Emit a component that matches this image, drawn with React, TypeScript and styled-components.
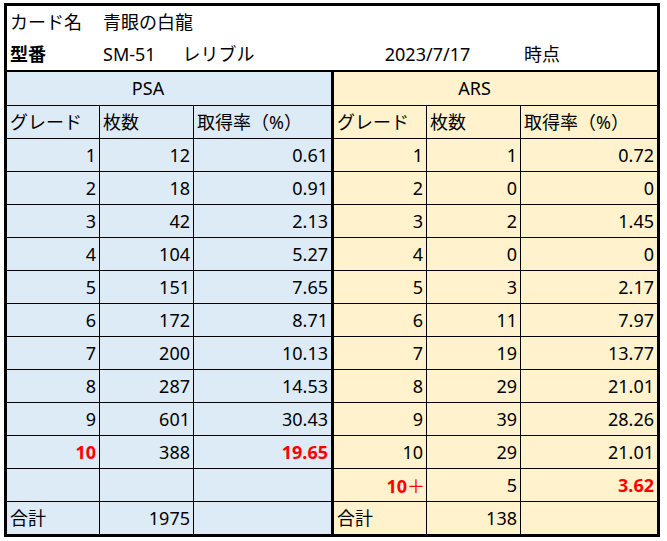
import React from 'react';
import styled, { createGlobalStyle } from 'styled-components';

const GlobalStyle = createGlobalStyle`
  body {
    margin: 0;
    background: #ffffff;
    color: #000000;
    font-family: 'Noto Sans', 'Noto Sans CJK JP', sans-serif;
  }
`;

const Page = styled.div`
  padding: 3px 0 0 4px;
`;

const Sheet = styled.div`
  width: 650px;
  border: 3px solid #000;
  font-size: 18px;
`;

const TitleGrid = styled.div`
  display: grid;
  grid-template-columns: 93px 94px 140px 93px 94px 136px;
  grid-auto-rows: 32px;
  border-bottom: 2px solid #000;
  background: #ffffff;
`;

const TitleCell = styled.div<{ $col: string; $bold?: boolean; $center?: boolean }>`
  grid-column: ${(p) => p.$col};
  padding: 0 3px;
  line-height: 32px;
  white-space: nowrap;
  font-weight: ${(p) => (p.$bold ? 700 : 400)};
  text-align: ${(p) => (p.$center ? 'center' : 'left')};
`;

const Rarity = styled.span`
  margin-left: 27px;
`;

const Groups = styled.div`
  display: flex;
`;

const Group = styled.div<{ $bg: string; $divider?: boolean; $cols: string }>`
  display: grid;
  grid-template-columns: ${(p) => p.$cols};
  background: ${(p) => p.$bg};
  border-right: ${(p) => (p.$divider ? '3px solid #000' : 'none')};
`;

const GroupTitle = styled.div`
  grid-column: 1 / 4;
  height: 33px;
  line-height: 32px;
  border-bottom: 1px solid #000;
  text-align: center;
  padding-right: 42px;
`;

const Cell = styled.div<{ $right?: boolean; $red?: boolean; $last?: boolean }>`
  box-sizing: border-box;
  height: ${(p) => (p.$last ? '32px' : '33px')};
  line-height: 32px;
  padding: 0 3px 0 3px;
  border-right: 1px solid #000;
  border-bottom: ${(p) => (p.$last ? 'none' : '1px solid #000')};
  text-align: ${(p) => (p.$right ? 'right' : 'left')};
  color: ${(p) => (p.$red ? '#ff0000' : '#000')};
  font-weight: ${(p) => (p.$red ? 700 : 400)};
  white-space: nowrap;

  &:nth-child(3n + 1) {
    border-right: none;
  }
`;

const Plus = styled.span`
  font-weight: 400;
  font-family: 'Noto Sans CJK JP', sans-serif;
  margin-right: -2px;
`;

type Row = { grade: React.ReactNode; count: string; rate: string; red?: boolean };

const psa: Row[] = [
  { grade: '1', count: '12', rate: '0.61' },
  { grade: '2', count: '18', rate: '0.91' },
  { grade: '3', count: '42', rate: '2.13' },
  { grade: '4', count: '104', rate: '5.27' },
  { grade: '5', count: '151', rate: '7.65' },
  { grade: '6', count: '172', rate: '8.71' },
  { grade: '7', count: '200', rate: '10.13' },
  { grade: '8', count: '287', rate: '14.53' },
  { grade: '9', count: '601', rate: '30.43' },
  { grade: '10', count: '388', rate: '19.65', red: true },
  { grade: '', count: '', rate: '' },
];

const ars: Row[] = [
  { grade: '1', count: '1', rate: '0.72' },
  { grade: '2', count: '0', rate: '0' },
  { grade: '3', count: '2', rate: '1.45' },
  { grade: '4', count: '0', rate: '0' },
  { grade: '5', count: '3', rate: '2.17' },
  { grade: '6', count: '11', rate: '7.97' },
  { grade: '7', count: '19', rate: '13.77' },
  { grade: '8', count: '29', rate: '21.01' },
  { grade: '9', count: '39', rate: '28.26' },
  { grade: '10', count: '29', rate: '21.01' },
  {
    grade: (
      <>
        10<Plus>＋</Plus>
      </>
    ),
    count: '5',
    rate: '3.62',
    red: true,
  },
];

function GradeGroup(props: {
  name: string;
  bg: string;
  cols: string;
  divider?: boolean;
  rows: Row[];
  total: string;
}) {
  const { name, bg, cols, divider, rows, total } = props;
  return (
    <Group $bg={bg} $cols={cols} $divider={divider}>
      <GroupTitle>{name}</GroupTitle>
      <Cell>グレード</Cell>
      <Cell>枚数</Cell>
      <Cell>取得率（%）</Cell>
      {rows.map((r, i) => (
        <React.Fragment key={i}>
          <Cell $right $red={r.red}>{r.grade}</Cell>
          <Cell $right>{r.count}</Cell>
          <Cell $right $red={r.red}>{r.rate}</Cell>
        </React.Fragment>
      ))}
      <Cell $last>合計</Cell>
      <Cell $last $right>{total}</Cell>
      <Cell $last />
    </Group>
  );
}

export default function App() {
  return (
    <Page>
      <GlobalStyle />
      <Sheet>
        <TitleGrid>
          <TitleCell $col="1">カード名</TitleCell>
          <TitleCell $col="2 / 7">青眼の白龍</TitleCell>
          <TitleCell $col="1" $bold>型番</TitleCell>
          <TitleCell $col="2 / 4">
            SM-51<Rarity>レリブル</Rarity>
          </TitleCell>
          <TitleCell $col="4 / 6" $center>2023/7/17</TitleCell>
          <TitleCell $col="6">時点</TitleCell>
        </TitleGrid>
        <Groups>
          <GradeGroup
            name="PSA"
            bg="#ddebf7"
            cols="93px 94px 137px"
            divider
            rows={psa}
            total="1975"
          />
          <GradeGroup
            name="ARS"
            bg="#fff2cc"
            cols="93px 94px 136px"
            rows={ars}
            total="138"
          />
        </Groups>
      </Sheet>
    </Page>
  );
}
